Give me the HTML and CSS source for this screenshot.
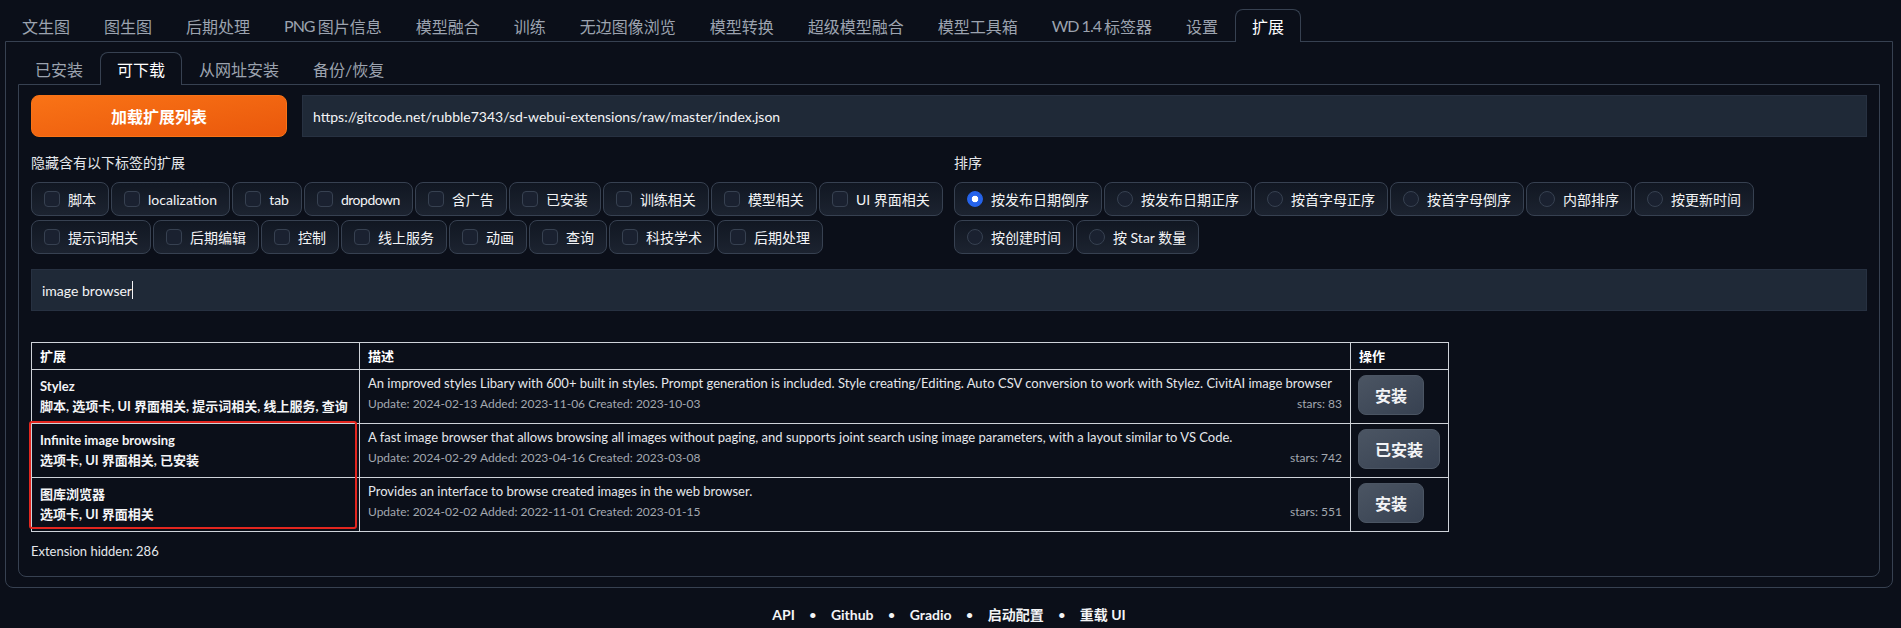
FILE: index.html
```html
<!DOCTYPE html>
<html lang="zh-CN">
<head>
<meta charset="utf-8">
<title>扩展</title>
<link rel="stylesheet" href="styles.css">
</head>
<body>
<div class="app">
  <nav class="tabs-top">
    <span class="tab">文生图</span>
    <span class="tab">图生图</span>
    <span class="tab">后期处理</span>
    <span class="tab"><span class="lat">PNG </span>图片信息</span>
    <span class="tab">模型融合</span>
    <span class="tab">训练</span>
    <span class="tab">无边图像浏览</span>
    <span class="tab">模型转换</span>
    <span class="tab">超级模型融合</span>
    <span class="tab">模型工具箱</span>
    <span class="tab"><span class="lat">WD 1.4 </span>标签器</span>
    <span class="tab">设置</span>
    <span class="tab active">扩展</span>
  </nav>
  <section class="outer-panel">
    <nav class="tabs-sub">
      <span class="tab">已安装</span>
      <span class="tab active">可下载</span>
      <span class="tab">从网址安装</span>
      <span class="tab">备份/恢复</span>
    </nav>
    <section class="inner-panel">
      <div class="load-row">
        <button class="btn-primary">加载扩展列表</button>
        <div class="text-input">https://gitcode.net/rubble7343/sd-webui-extensions/raw/master/index.json</div>
      </div>
      <div class="filter-row">
        <div class="filter-col">
          <div class="field-label">隐藏含有以下标签的扩展</div>
          <div class="chips">
            <label class="chip"><span class="box"></span>脚本</label>
            <label class="chip"><span class="box"></span>localization</label>
            <label class="chip"><span class="box"></span>tab</label>
            <label class="chip"><span class="box"></span><span class="lat">dropdown</span></label>
            <label class="chip"><span class="box"></span>含广告</label>
            <label class="chip"><span class="box"></span>已安装</label>
            <label class="chip"><span class="box"></span>训练相关</label>
            <label class="chip"><span class="box"></span>模型相关</label>
            <label class="chip"><span class="box"></span>UI 界面相关</label>
            <label class="chip"><span class="box"></span>提示词相关</label>
            <label class="chip"><span class="box"></span>后期编辑</label>
            <label class="chip"><span class="box"></span>控制</label>
            <label class="chip"><span class="box"></span>线上服务</label>
            <label class="chip"><span class="box"></span>动画</label>
            <label class="chip"><span class="box"></span>查询</label>
            <label class="chip"><span class="box"></span>科技学术</label>
            <label class="chip"><span class="box"></span>后期处理</label>
          </div>
        </div>
        <div class="filter-col">
          <div class="field-label">排序</div>
          <div class="chips">
            <label class="chip"><span class="radio checked"></span>按发布日期倒序</label>
            <label class="chip"><span class="radio"></span>按发布日期正序</label>
            <label class="chip"><span class="radio"></span>按首字母正序</label>
            <label class="chip"><span class="radio"></span>按首字母倒序</label>
            <label class="chip"><span class="radio"></span>内部排序</label>
            <label class="chip"><span class="radio"></span>按更新时间</label>
            <label class="chip"><span class="radio"></span>按创建时间</label>
            <label class="chip"><span class="radio"></span>按 Star 数量</label>
          </div>
        </div>
      </div>
      <div class="text-input search">image browser<span class="caret"></span></div>
      <div class="table-wrap">
        <table class="ext-table">
          <colgroup>
            <col class="col-name">
            <col class="col-desc">
            <col class="col-action">
          </colgroup>
          <thead>
            <tr><th>扩展</th><th>描述</th><th>操作</th></tr>
          </thead>
          <tbody>
            <tr>
              <td class="name"><div>Stylez</div><div>脚本, 选项卡, UI 界面相关, 提示词相关, 线上服务, 查询</div></td>
              <td class="desc">An improved styles Libary with 600+ built in styles. Prompt generation is included. Style creating/Editing. Auto CSV conversion to work with Stylez. CivitAI image browser<div class="info"><span>Update: 2024-02-13 Added: 2023-11-06 Created: 2023-10-03</span><span>stars: 83</span></div></td>
              <td class="action"><button class="btn-secondary">安装</button></td>
            </tr>
            <tr>
              <td class="name"><div>Infinite image browsing</div><div>选项卡, UI 界面相关, 已安装</div></td>
              <td class="desc">A fast image browser that allows browsing all images without paging, and supports joint search using image parameters, with a layout similar to VS Code.<div class="info"><span>Update: 2024-02-29 Added: 2023-04-16 Created: 2023-03-08</span><span>stars: 742</span></div></td>
              <td class="action"><button class="btn-secondary">已安装</button></td>
            </tr>
            <tr>
              <td class="name"><div>图库浏览器</div><div>选项卡, UI 界面相关</div></td>
              <td class="desc">Provides an interface to browse created images in the web browser.<div class="info"><span>Update: 2024-02-02 Added: 2022-11-01 Created: 2023-01-15</span><span>stars: 551</span></div></td>
              <td class="action"><button class="btn-secondary">安装</button></td>
            </tr>
          </tbody>
        </table>
        <div class="highlight"></div>
      </div>
      <div class="hidden-count">Extension hidden: 286</div>
    </section>
  </section>
  <footer class="footer">
    <span>API</span><span class="dot">•</span><span>Github</span><span class="dot">•</span><span>Gradio</span><span class="dot">•</span><span>启动配置</span><span class="dot">•</span><span>重载 UI</span>
  </footer>
</div>
</body>
</html>
```
FILE: styles.css
```css
* { box-sizing: border-box; }
html, body { margin: 0; padding: 0; }
body {
  background: #0b0f19;
  color: #e5e7eb;
  font-family: Lato, "Noto Sans CJK SC", sans-serif;
  font-size: 14px;
}
.app { padding: 0 8px 0 5px; }

/* tabs */
.tabs-top, .tabs-sub {
  display: flex;
  align-items: flex-end;
}
.tabs-top { padding-top: 9px; }
.tab {
  display: flex;
  align-items: center;
  height: 32px;
  padding: 0 16px;
  font-size: 16px;
  color: #9ca3af;
  border: 1px solid transparent;
  border-bottom: none;
  border-radius: 8px 8px 0 0;
  white-space: nowrap;
}
.tab .lat {
  letter-spacing: -1px;
  white-space: pre;
}
.tab.active {
  color: #ffffff;
  border-color: #374151;
  background: #0b0f19;
  margin-bottom: -1px;
  height: 33px;
  position: relative;
  z-index: 1;
}

.outer-panel {
  border: 1px solid #374151;
  border-radius: 0 0 8px 8px;
  padding: 10px 12px 10px 12px;
}
.inner-panel {
  border: 1px solid #374151;
  border-radius: 0 0 8px 8px;
  padding: 10px 12px 16px 12px;
  display: flex;
  flex-direction: column;
}

/* load row */
.load-row {
  display: flex;
  gap: 15px;
  height: 42px;
}
.btn-primary {
  width: 256px;
  flex: none;
  border: 1px solid #f97316;
  border-radius: 8px;
  background: linear-gradient(to bottom right, #f97316, #ea580c);
  color: #ffffff;
  font-family: inherit;
  font-size: 16px;
  font-weight: 700;
}
.text-input {
  flex: 1;
  display: flex;
  align-items: center;
  background: #1f2937;
  border: 1px solid #273141;
  padding: 0 10px;
  font-size: 14px;
  color: #f3f4f6;
}

/* filters */
.filter-row {
  display: grid;
  grid-template-columns: 1fr 913px;
  column-gap: 0;
  margin-top: 16px;
}
.field-label {
  font-size: 14px;
  line-height: 20px;
  color: #e5e7eb;
  margin-bottom: 9px;
}
.chips {
  display: flex;
  flex-wrap: wrap;
  gap: 4px 2px;
}
.chip {
  display: flex;
  align-items: center;
  gap: 8px;
  height: 34px;
  padding: 0 12px;
  border: 1px solid #374151;
  border-radius: 8px;
  background: linear-gradient(to top, #1c2330, #111722);
  color: #f3f4f6;
  font-size: 14px;
  white-space: nowrap;
}
.chip .lat { letter-spacing: -0.5px; }
.box {
  width: 16px;
  height: 16px;
  border: 1px solid #374151;
  border-radius: 4px;
  background: #1a2130;
}
.radio {
  width: 16px;
  height: 16px;
  border: 1px solid #374151;
  border-radius: 50%;
  background: #1a2130;
}
.radio.checked {
  border-color: #2563eb;
  background: radial-gradient(circle, #ffffff 0 3px, #2563eb 3.6px);
}

.search {
  flex: none;
  height: 42px;
  margin-top: 15px;
}
.caret {
  display: inline-block;
  width: 1px;
  height: 18px;
  background: #f3f4f6;
}

/* table */
.table-wrap {
  position: relative;
  margin-top: 31px;
  width: 1417px;
}
.ext-table {
  border-collapse: collapse;
  table-layout: fixed;
  width: 1417px;
  font-size: 13px;
}
.col-name { width: 328px; }
.col-desc { width: 991px; }
.col-action { width: 98px; }
.ext-table th, .ext-table td {
  border: 1px solid #cfd3d9;
  text-align: left;
}
.ext-table th {
  padding: 4px 8px;
  line-height: 18px;
  font-weight: 700;
  color: #ffffff;
}
.ext-table td.name {
  padding: 7px 8px;
  line-height: 19.5px;
  font-weight: 700;
  color: #f3f4f6;
  vertical-align: middle;
  white-space: nowrap;
}
.ext-table td.desc {
  padding: 4px 8px;
  line-height: 18px;
  color: #e5e7eb;
  vertical-align: top;
  white-space: nowrap;
}
.info {
  display: flex;
  justify-content: space-between;
  margin-top: 4px;
  font-size: 12px;
  line-height: 16px;
  color: #a3a8b0;
}
.ext-table td.action {
  padding: 5px 7px;
  vertical-align: top;
}
.btn-secondary {
  height: 40px;
  padding: 0 16px;
  border: 1px solid #4b5563;
  border-radius: 8px;
  background: linear-gradient(to bottom right, #4b5563, #374151);
  color: #f3f4f6;
  font-family: inherit;
  font-size: 16px;
  font-weight: 700;
  white-space: nowrap;
}
.highlight {
  position: absolute;
  left: -2px;
  top: 79px;
  width: 328px;
  height: 108px;
  border: 2px solid #e3261f;
  border-radius: 3px;
  pointer-events: none;
}
.hidden-count {
  margin-top: 10px;
  font-size: 13px;
  line-height: 18px;
  color: #e5e7eb;
}

.footer {
  display: flex;
  justify-content: center;
  align-items: center;
  margin-top: 17px;
  font-size: 14px;
  line-height: 20px;
  font-weight: 700;
  color: #f3f4f6;
}
.footer .dot {
  margin: 0 14px;
  font-weight: 400;
}
```
